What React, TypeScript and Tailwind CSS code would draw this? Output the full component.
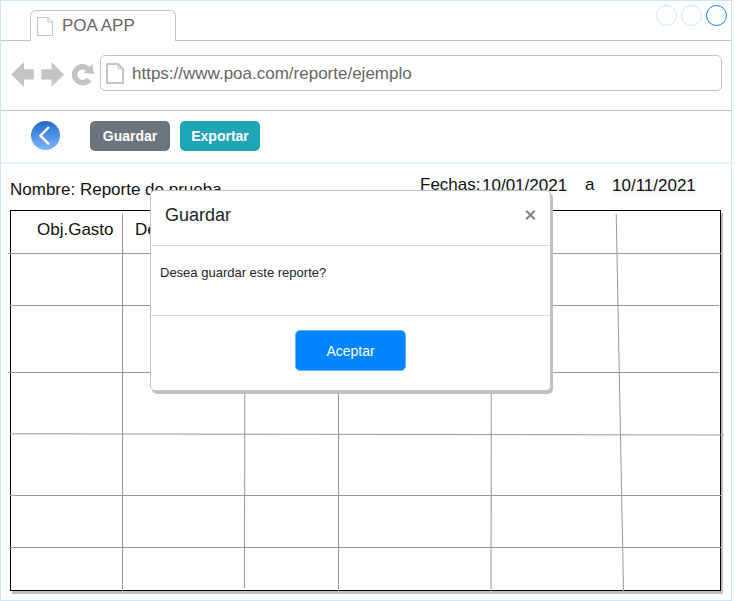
import React from "react";

function PageIcon({ className, w, h, fold, stroke }: { className?: string; w: number; h: number; fold: number; stroke: number }) {
  const s = stroke / 2;
  return (
    <svg className={className} width={w} height={h} viewBox={`0 0 ${w} ${h}`} fill="none" stroke="#c4c4c4" strokeWidth={stroke}>
      <path d={`M${s} ${s}H${w - fold}L${w - s} ${fold}V${h - s}H${s}Z`} />
      <path d={`M${w - fold} ${s}V${fold}H${w - s}`} strokeWidth={1} />
    </svg>
  );
}

function TabStrip() {
  return (
    <div className="flex h-10 shrink-0">
      <div className="w-[29px] border-b border-[#c4c4c4]" />
      <div className="mt-[9px] flex w-[146px] rounded-t-[6px] border border-b-0 border-[#c4c4c4] pl-[6px] text-[17px] leading-[30px] text-[#666]">
        <PageIcon className="mt-[6px] mr-[9px]" w={16} h={19} fold={5} stroke={1} />
        POA APP
      </div>
      <div className="flex flex-1 justify-end gap-[4px] border-b border-[#c4c4c4] pt-[4px] pr-[4px]">
        <div className="size-[21px] rounded-full border border-[#cce5ff]" />
        <div className="size-[21px] rounded-full border border-[#cce5ff]" />
        <div className="size-[21px] rounded-full border border-[#0085ff]" />
      </div>
    </div>
  );
}

function AddressBar() {
  return (
    <div className="flex h-[70px] shrink-0 border-b border-[#c4c4c4] pt-[14px] pl-[10px]">
      <svg width="89" height="36" viewBox="0 0 89 36" fill="#c4c4c4">
        <path d="M0.2 19.5L13 7V14.2H22.8V24.5H13V31.7Z" />
        <path d="M53 19.5L40.5 7V14.2H30.3V24.5H40.5V31.7Z" />
        <path d="M78.1 24.3A8 8 0 1 1 77.2 14" fill="none" stroke="#c4c4c4" strokeWidth="5.5" />
        <path d="M81.3 9L83 19L72.8 17.7Z" />
      </svg>
      <div className="flex h-9 w-[622px] rounded-[5px] border border-[#c4c4c4] pl-[5px] text-[17px] leading-[35px] text-[#666]">
        <PageIcon className="mt-[7px] mr-[8px]" w={18} h={21} fold={6} stroke={2} />
        https://www.poa.com/reporte/ejemplo
      </div>
    </div>
  );
}

function Actions() {
  return (
    <div className="flex h-[53px] w-[733px] shrink-0 border-b-2 border-[#e5f2ff] pt-[10px] pl-[30px] text-[14px] font-bold text-white">
      <button className="mr-[30px] size-[29px] rounded-full bg-linear-to-b from-[#1f66d0] to-[#7db5ff]">
        <svg width="29" height="29" viewBox="0 0 29 29" fill="none" stroke="white" strokeWidth="2.5">
          <path d="M18 6L9.5 14.7L18 23.3" />
        </svg>
      </button>
      <button className="mr-[10px] h-[30px] w-20 rounded-[5px] bg-[#6c757d]">Guardar</button>
      <button className="h-[30px] w-20 rounded-[5px] bg-[#1fa5b8]">Exportar</button>
    </div>
  );
}

const rules = [
  [-2, 43.5, 711, 43.5],
  [0, 95.5, 709, 95.5],
  [-2, 162.5, 709, 162.5],
  [0, 223.8, 714, 225],
  [0, 285.5, 711, 285.5],
  [-1, 337.5, 712, 337.5],
  [112.5, 4, 112.5, 381],
  [235, 4, 234.5, 378],
  [328.5, 4, 328.5, 381],
  [481.5, 4, 481, 381],
  [606.2, 4, 613.5, 381],
];

function Report() {
  return (
    <div className="pl-[9px] text-[17px] text-[#111]">
      <div className="flex h-[46px]">
        <span className="w-[410px] pt-[14px] leading-[24px]">Nombre: Reporte de prueba</span>
        <span className="w-[62px] pt-[9px] leading-[24px]">Fechas:</span>
        <span className="mt-[13px] h-[19px] w-[85px] bg-[#f8f9fa] leading-[18px]">10/01/2021</span>
        <span className="w-[45px] pt-[9px] pl-[18px] leading-[24px]">a</span>
        <span className="mt-[13px] h-[19px] w-[84px] bg-[#f8f9fa] leading-[18px]">10/11/2021</span>
      </div>
      <div className="relative h-[381px] w-[711px] border border-black shadow-[2px_3px_0_#c0c0c0]">
        <div className="flex pt-[7px] pl-[26px] leading-[24px]">
          <span className="w-[98px]">Obj.Gasto</span>
          <span>De</span>
        </div>
        <svg className="absolute -top-px -left-px overflow-visible" width="711" height="381" stroke="#999" strokeWidth="1">
          {rules.map(([x1, y1, x2, y2], i) => (
            <line key={i} x1={x1} y1={y1} x2={x2} y2={y2} />
          ))}
        </svg>
      </div>
    </div>
  );
}

function SaveDialog() {
  return (
    <div className="absolute top-[189px] left-[149px] flex h-[201px] w-[401px] flex-col rounded-[5px] border border-[#c4c4c4] bg-white text-[#212529] shadow-[2px_3px_0_#c0c0c0]">
      <div className="flex h-[55px] justify-between border-b border-[#d9d9d9] pr-[14px] pl-[14px] text-[18px] leading-[48px]">
        Guardar
        <svg className="mt-[19px]" width="11" height="10" viewBox="0 0 11 10" stroke="#808080" strokeWidth="2">
          <path d="M1.2 .8L9.8 9.2M9.8 .8L1.2 9.2" />
        </svg>
      </div>
      <div className="h-[70px] border-b border-[#d9d9d9] pt-[17px] pl-[9px] text-[13px] leading-[20px]">Desea guardar este reporte?</div>
      <button className="mt-[14px] ml-[144px] h-[41px] w-[111px] rounded-[5px] border border-[#66b5ff] bg-[#0085ff] pt-[2px] text-[14px] text-white">Aceptar</button>
    </div>
  );
}

export default function App() {
  return (
    <div className="h-[601px] w-[736px] overflow-hidden bg-white font-['Liberation_Sans',Arial,sans-serif]">
      <div className="relative flex h-[601px] w-[732px] flex-col border border-[#cce5ff]">
        <TabStrip />
        <AddressBar />
        <Actions />
        <Report />
        <SaveDialog />
      </div>
    </div>
  );
}
